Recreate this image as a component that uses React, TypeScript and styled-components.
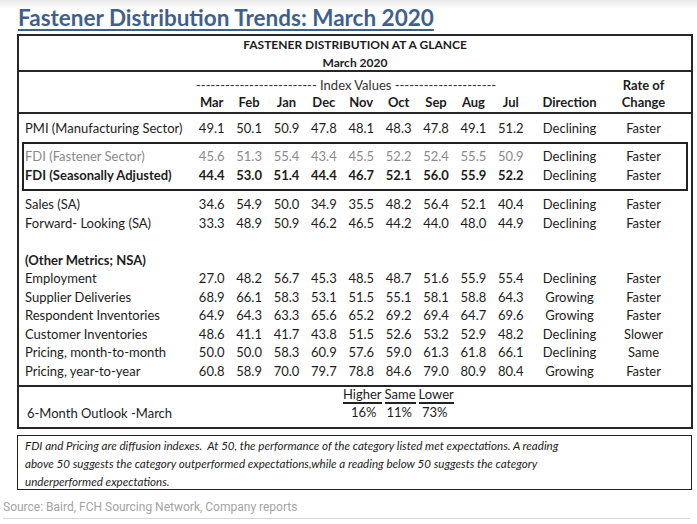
import React from 'react';
import styled, { createGlobalStyle } from 'styled-components';

const Global = createGlobalStyle`
  html, body { margin: 0; padding: 0; background: #fff; }
  body { font-family: Lato, "Liberation Sans", sans-serif; color: #1c1c1c; }
`;

const Page = styled.div`
  width: 697px;
  height: 524px;
  overflow: hidden;
  background: linear-gradient(#e9e9e9 0px, #ffffff 9px);
`;

const Title = styled.h1`
  margin: 0;
  height: 30px;
  padding: 4px 0 0 18px;
  font: 700 22.5px/28px Lato, "Liberation Sans", sans-serif;
  color: #3f5f8f;
  text-decoration: underline;
  text-decoration-thickness: 2px;
  text-underline-offset: 3px;
  white-space: nowrap;
`;

const Board = styled.section`
  margin-left: 17px;
  width: 676px;
  box-sizing: border-box;
  border: 2px solid #262626;
`;

const Heading = styled.header`
  height: 36px;
  box-sizing: border-box;
  border-bottom: 2px solid #262626;
  text-align: center;
  font-weight: 700;
  font-size: 12px;
  line-height: 17.5px;
`;

const COLS = `168px repeat(9, 37.4px) 80px 68px`;

const Row = styled.div<{ $boxed?: boolean }>`
  display: grid;
  grid-template-columns: ${COLS};
  padding-left: ${(p) => (p.$boxed ? 1 : 6)}px;
  font-size: 13px;
  line-height: 18.5px;
  height: 18.5px;
  white-space: nowrap;
`;

const HeadRow = styled(Row)`
  line-height: 17px;
  height: 17px;
  font-weight: 700;
`;

const ColumnHead = styled.div`
  height: 42px;
  box-sizing: border-box;
  padding-top: 5px;
  border-bottom: 2px solid #262626;
`;

const Dashes = styled.div`
  grid-column: 2 / span 9;
  font-weight: 400;
  padding-left: 3px;
  color: #333;
`;

const Cell = styled.div<{ $tone?: 'muted' | 'bold' | 'normal' }>`
  text-align: center;
  color: ${(p) => (p.$tone === 'muted' ? '#8a8a8a' : '#1c1c1c')};
  font-weight: ${(p) => (p.$tone === 'bold' ? 700 : 400)};
`;

const RateHead = styled(Cell)`
  grid-column: 12;
`;

const Label = styled(Cell)`
  text-align: left;
`;

const Body = styled.div`
  padding: 4.5px 0 4.5px;
`;

const FdiBox = styled.div`
  margin: 5px 3px 4px;
  border: 2px solid #222;
  padding: 3px 0 5px;
`;

const Spacer = styled.div`
  height: 18.5px;
`;

const Outlook = styled.div`
  height: 42px;
  box-sizing: border-box;
  border-top: 2px solid #262626;
  display: grid;
  grid-template-columns: 316px auto;
  padding-left: 8px;
  font-size: 13px;
`;

const OutlookLabel = styled.div`
  align-self: end;
  line-height: 15px;
  padding-bottom: 6px;
`;

const OutlookStack = styled.div`
  display: flex;
  flex-direction: column;
`;

const OutlookHeads = styled.div`
  display: flex;
  gap: 3px;
`;

const OutlookHead = styled.span`
  line-height: 15px;
  border-bottom: 2px solid #222;
`;

const OutlookPcts = styled.div`
  display: flex;
  gap: 10px;
  padding-left: 8px;
  line-height: 17px;
`;

const Footnote = styled.p`
  margin: 6.5px 0 0 17px;
  width: 675px;
  height: 55px;
  box-sizing: border-box;
  border: 1.5px solid #222;
  padding: 1px 7px 0;
  font-style: italic;
  font-size: 11.6px;
  line-height: 17.8px;
`;

const Source = styled.div`
  margin: 8px 7px 0 3px;
  padding-bottom: 2px;
  border-bottom: 1px solid #d6d6d6;
  font: 400 12px/18px Roboto, "Liberation Sans", sans-serif;
  color: #a3a3a3;
`;

type Tone = 'muted' | 'bold' | 'normal';
type Line = { label: string; values: string[]; dir: string; rate: string; tone?: Tone };

const months = ['Mar', 'Feb', 'Jan', 'Dec', 'Nov', 'Oct', 'Sep', 'Aug', 'Jul'];

const pmi: Line = {
  label: 'PMI (Manufacturing Sector)',
  values: ['49.1', '50.1', '50.9', '47.8', '48.1', '48.3', '47.8', '49.1', '51.2'],
  dir: 'Declining',
  rate: 'Faster',
};

const fdi: Line[] = [
  {
    label: 'FDI (Fastener Sector)',
    values: ['45.6', '51.3', '55.4', '43.4', '45.5', '52.2', '52.4', '55.5', '50.9'],
    dir: 'Declining',
    rate: 'Faster',
    tone: 'muted',
  },
  {
    label: 'FDI (Seasonally Adjusted)',
    values: ['44.4', '53.0', '51.4', '44.4', '46.7', '52.1', '56.0', '55.9', '52.2'],
    dir: 'Declining',
    rate: 'Faster',
    tone: 'bold',
  },
];

const sales: Line[] = [
  {
    label: 'Sales (SA)',
    values: ['34.6', '54.9', '50.0', '34.9', '35.5', '48.2', '56.4', '52.1', '40.4'],
    dir: 'Declining',
    rate: 'Faster',
  },
  {
    label: 'Forward- Looking (SA)',
    values: ['33.3', '48.9', '50.9', '46.2', '46.5', '44.2', '44.0', '48.0', '44.9'],
    dir: 'Declining',
    rate: 'Faster',
  },
];

const other: Line[] = [
  {
    label: 'Employment',
    values: ['27.0', '48.2', '56.7', '45.3', '48.5', '48.7', '51.6', '55.9', '55.4'],
    dir: 'Declining',
    rate: 'Faster',
  },
  {
    label: 'Supplier Deliveries',
    values: ['68.9', '66.1', '58.3', '53.1', '51.5', '55.1', '58.1', '58.8', '64.3'],
    dir: 'Growing',
    rate: 'Faster',
  },
  {
    label: 'Respondent Inventories',
    values: ['64.9', '64.3', '63.3', '65.6', '65.2', '69.2', '69.4', '64.7', '69.6'],
    dir: 'Growing',
    rate: 'Faster',
  },
  {
    label: 'Customer Inventories',
    values: ['48.6', '41.1', '41.7', '43.8', '51.5', '52.6', '53.2', '52.9', '48.2'],
    dir: 'Declining',
    rate: 'Slower',
  },
  {
    label: 'Pricing, month-to-month',
    values: ['50.0', '50.0', '58.3', '60.9', '57.6', '59.0', '61.3', '61.8', '66.1'],
    dir: 'Declining',
    rate: 'Same',
  },
  {
    label: 'Pricing, year-to-year',
    values: ['60.8', '58.9', '70.0', '79.7', '78.8', '84.6', '79.0', '80.9', '80.4'],
    dir: 'Growing',
    rate: 'Faster',
  },
];

const DataRow = ({ line, boxed }: { line: Line; boxed?: boolean }) => (
  <Row $boxed={boxed}>
    <Label $tone={line.tone}>{line.label}</Label>
    {line.values.map((v, i) => (
      <Cell key={i} $tone={line.tone}>
        {v}
      </Cell>
    ))}
    <Cell>{line.dir}</Cell>
    <Cell>{line.rate}</Cell>
  </Row>
);

export default function App() {
  return (
    <Page>
      <Global />
      <Title>Fastener Distribution Trends: March 2020</Title>
      <Board>
        <Heading>
          <div>FASTENER DISTRIBUTION AT A GLANCE</div>
          <div>March 2020</div>
        </Heading>
        <ColumnHead>
          <HeadRow>
            <div />
            <Dashes>------------------------- Index Values ---------------------</Dashes>
            <RateHead $tone="bold">Rate of</RateHead>
          </HeadRow>
          <HeadRow>
            <div />
            {months.map((m) => (
              <Cell key={m} $tone="bold">
                {m}
              </Cell>
            ))}
            <Cell $tone="bold">Direction</Cell>
            <Cell $tone="bold">Change</Cell>
          </HeadRow>
        </ColumnHead>
        <Body>
          <DataRow line={pmi} />
          <FdiBox>
            {fdi.map((l) => (
              <DataRow key={l.label} line={l} boxed />
            ))}
          </FdiBox>
          {sales.map((l) => (
            <DataRow key={l.label} line={l} />
          ))}
          <Spacer />
          <Row>
            <Label $tone="bold">(Other Metrics; NSA)</Label>
          </Row>
          {other.map((l) => (
            <DataRow key={l.label} line={l} />
          ))}
        </Body>
        <Outlook>
          <OutlookLabel>6-Month Outlook -March</OutlookLabel>
          <OutlookStack>
            <OutlookHeads>
              <OutlookHead>Higher</OutlookHead>
              <OutlookHead>Same</OutlookHead>
              <OutlookHead>Lower</OutlookHead>
            </OutlookHeads>
            <OutlookPcts>
              <span>16%</span>
              <span>11%</span>
              <span>73%</span>
            </OutlookPcts>
          </OutlookStack>
        </Outlook>
      </Board>
      <Footnote>
        FDI and Pricing are diffusion indexes.&nbsp; At 50, the performance of the category listed met
        expectations. A reading
        <br />
        above 50 suggests the category outperformed expectations,while a reading below 50 suggests the
        category
        <br />
        underperformed expectations.
      </Footnote>
      <Source>Source: Baird, FCH Sourcing Network, Company reports</Source>
    </Page>
  );
}
